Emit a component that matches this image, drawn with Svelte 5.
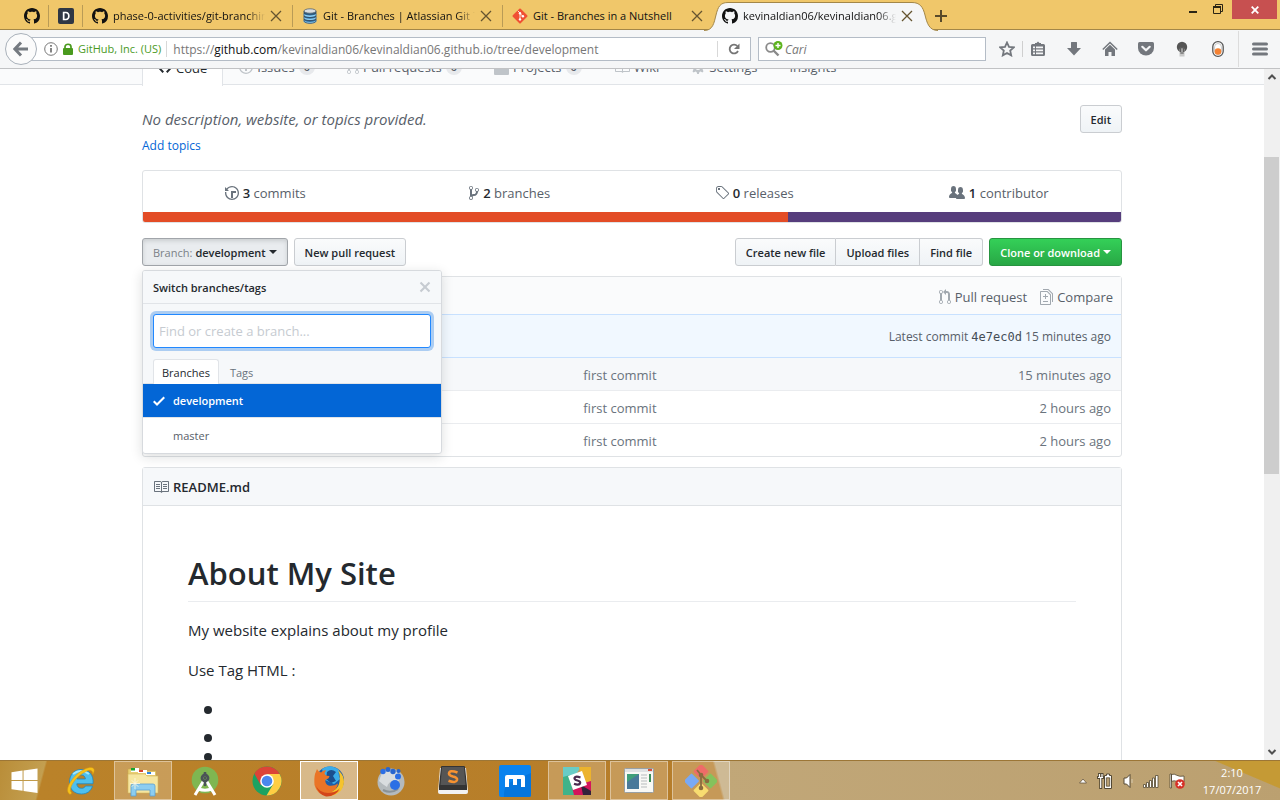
<script>
  const icons = {
    github: [16, 'M8 0C3.58 0 0 3.58 0 8c0 3.54 2.29 6.53 5.47 7.59.4.07.55-.17.55-.38 0-.19-.01-.82-.01-1.49-2.01.37-2.53-.49-2.69-.94-.09-.23-.48-.94-.82-1.13-.28-.15-.68-.52-.01-.53.63-.01 1.08.58 1.23.82.72 1.21 1.87.87 2.33.66.07-.52.28-.87.51-1.07-1.78-.2-3.64-.89-3.64-3.95 0-.87.31-1.59.82-2.15-.08-.2-.36-1.02.08-2.12 0 0 .67-.21 2.2.82.64-.18 1.32-.27 2-.27.68 0 1.36.09 2 .27 1.53-1.04 2.2-.82 2.2-.82.44 1.1.16 1.92.08 2.12.51.56.82 1.27.82 2.15 0 3.07-1.87 3.75-3.65 3.95.29.25.54.73.54 1.48 0 1.07-.01 1.93-.01 2.2 0 .21.15.46.55.38A8.013 8.013 0 0 0 16 8c0-4.42-3.58-8-8-8z'],
    history: [14, 'M8 13H6V6h5v2H8v5zM7 1C4.81 1 2.87 2.02 1.59 3.59L0 2v4h4L2.5 4.5C3.55 3.17 5.17 2.3 7 2.3c3.14 0 5.7 2.56 5.7 5.7s-2.56 5.7-5.7 5.7A5.71 5.71 0 0 1 1.3 8c0-.34.03-.67.09-1H.08C.03 7.33 0 7.66 0 8c0 3.86 3.14 7 7 7s7-3.14 7-7-3.14-7-7-7z'],
    branch: [10, 'M10 5c0-1.11-.89-2-2-2a1.993 1.993 0 0 0-1 3.72v.3c-.02.52-.23.98-.63 1.38-.4.4-.86.61-1.38.63-.83.02-1.48.16-2 .45V4.72a1.993 1.993 0 0 0-1-3.72C.88 1 0 1.89 0 3a2 2 0 0 0 1 1.72v6.56c-.59.35-1 .99-1 1.72 0 1.11.89 2 2 2 1.11 0 2-.89 2-2 0-.53-.2-1-.53-1.36.09-.06.48-.41.59-.47.25-.11.56-.17.94-.17 1.05-.05 1.95-.45 2.75-1.25S8.95 7.77 9 6.73h-.02C9.59 6.37 10 5.73 10 5zM2 1.8c.66 0 1.2.55 1.2 1.2 0 .65-.55 1.2-1.2 1.2C1.35 4.2.8 3.65.8 3c0-.65.55-1.2 1.2-1.2zm0 12.41c-.66 0-1.2-.55-1.2-1.2 0-.65.55-1.2 1.2-1.2.65 0 1.2.55 1.2 1.2 0 .65-.55 1.2-1.2 1.2zm6-8c-.66 0-1.2-.55-1.2-1.2 0-.65.55-1.2 1.2-1.2.65 0 1.2.55 1.2 1.2 0 .65-.55 1.2-1.2 1.2z'],
    tag: [14, 'M7.73 1.73C7.26 1.26 6.62 1 5.96 1H3.5C2.13 1 1 2.13 1 3.5v2.47c0 .66.27 1.3.73 1.77l6.06 6.06c.39.39 1.02.39 1.41 0l4.59-4.59a.996.996 0 0 0 0-1.41L7.73 1.73zM2.38 7.09c-.31-.3-.47-.7-.47-1.13V3.5c0-.88.72-1.59 1.59-1.59h2.47c.42 0 .83.16 1.13.47l6.14 6.13-4.73 4.73-6.13-6.15zM3.01 3h2v2H3V3h.01z'],
    people: [16, 'M16 12.999c0 .439-.45 1-1 1H7.995c-.539 0-.994-.447-.995-.999H1c-.54 0-1-.561-1-1 0-2.634 3-4 3-4s.229-.409 0-1c-.841-.621-1.058-.59-1-3 .058-2.419 1.367-3 2.5-3s2.442.58 2.5 3c.058 2.41-.159 2.379-1 3-.229.59 0 1 0 1s1.549.711 2.42 2.088C9.196 9.369 10 8.999 10 8.999s.229-.409 0-1c-.841-.62-1.058-.59-1-3 .058-2.419 1.367-3 2.5-3s2.437.581 2.495 3c.059 2.41-.158 2.38-1 3-.229.59 0 1 0 1s3.005 1.366 3.005 4'],
    pull: [12, 'M11 11.28V5c-.03-.78-.34-1.47-.94-2.06C9.46 2.35 8.78 2.03 8 2H7V0L4 3l3 3V4h1c.27.02.48.11.69.31.21.2.3.42.31.69v6.28A1.993 1.993 0 0 0 10 15a1.993 1.993 0 0 0 1-3.72zm-1 2.92c-.66 0-1.2-.55-1.2-1.2 0-.65.55-1.2 1.2-1.2.65 0 1.2.55 1.2 1.2 0 .65-.55 1.2-1.2 1.2zM4 3c0-1.11-.89-2-2-2a1.993 1.993 0 0 0-1 3.72v6.56A1.993 1.993 0 0 0 2 15a1.993 1.993 0 0 0 1-3.72V4.72c.59-.34 1-.98 1-1.72zm-.8 10c0 .66-.55 1.2-1.2 1.2-.65 0-1.2-.55-1.2-1.2 0-.65.55-1.2 1.2-1.2.65 0 1.2.55 1.2 1.2zM2 4.2C1.34 4.2.8 3.65.8 3c0-.65.55-1.2 1.2-1.2.65 0 1.2.55 1.2 1.2 0 .65-.55 1.2-1.2 1.2z'],
    diff: [13, 'M6 7h2v1H6v2H5V8H3V7h2V5h1v2zm-3 6h5v-1H3v1zM7.5 2L11 5.5V15c0 .55-.45 1-1 1H1c-.55 0-1-.45-1-1V3c0-.55.45-1 1-1h6.5zM10 6L7 3H1v12h9V6zM8.5 0H3v1h5l4 4v8h1V4.5L8.5 0z'],
    book: [16, 'M3 5h4v1H3V5zm0 3h4V7H3v1zm0 2h4V9H3v1zm11-5h-4v1h4V5zm0 2h-4v1h4V7zm0 2h-4v1h4V9zm2-6v9c0 .55-.45 1-1 1H9.5l-1 1-1-1H2c-.55 0-1-.45-1-1V3c0-.55.45-1 1-1h5.5l1 1 1-1H15c.55 0 1 .45 1 1zm-8 .5L7.5 3H2v9h6V3.5zm7-.5H9.5l-.5.5V12h6V3z'],
    check: [12, 'M12 5l-8 8-4-4 1.5-1.5L4 10l6.5-6.5L12 5z'],
    x: [12, 'M7.48 8l3.75 3.75-1.48 1.48L6 9.48l-3.75 3.75-1.48-1.48L4.52 8 .77 4.25l1.48-1.48L6 6.52l3.75-3.75 1.48 1.48L7.48 8z'],
    code: [14, 'M9.5 3L8 4.5 11.5 8 8 11.5 9.5 13 14 8 9.5 3zm-5 0L0 8l4.5 5L6 11.5 2.5 8 6 4.5 4.5 3z'],
    issue: [14, 'M7 2.3c3.14 0 5.7 2.56 5.7 5.7s-2.56 5.7-5.7 5.7A5.71 5.71 0 0 1 1.3 8c0-3.14 2.56-5.7 5.7-5.7zM7 1C3.14 1 0 4.14 0 8s3.14 7 7 7 7-3.14 7-7-3.14-7-7-7zm1 3H6v5h2V4zm0 6H6v2h2v-2z'],
    project: [15, 'M10 12h3V2h-3v10zm-4-2h3V2H6v8zm-4 4h3V2H2v12zm-1 1h13V1H1v14zM14 0H1a1 1 0 0 0-1 1v14a1 1 0 0 0 1 1h13a1 1 0 0 0 1-1V1a1 1 0 0 0-1-1z'],
    gear: [14, 'M14 8.77v-1.6l-1.94-.64-.45-1.09.88-1.84-1.13-1.13-1.81.91-1.09-.45-.69-1.92h-1.6l-.63 1.94-1.11.45-1.84-.88-1.13 1.13.91 1.81-.45 1.09L0 7.23v1.59l1.94.64.45 1.09-.88 1.84 1.13 1.13 1.81-.91 1.09.45.69 1.92h1.59l.63-1.94 1.11-.45 1.84.88 1.13-1.13-.92-1.81.47-1.09L14 8.75v.02zM7 11c-1.66 0-3-1.34-3-3s1.34-3 3-3 3 1.34 3 3-1.34 3-3 3z'],
  };

  const navTabs = [
    { icon: 'code', label: 'Code', active: true },
    { icon: 'issue', label: 'Issues', count: 0 },
    { icon: 'pull', label: 'Pull requests', count: 0 },
    { icon: 'project', label: 'Projects', count: 0 },
    { icon: 'book', label: 'Wiki' },
    { icon: 'gear', label: 'Settings' },
    { label: 'Insights', caret: true },
  ];
  const stats = [
    { icon: 'history', n: 3, label: 'commits' },
    { icon: 'branch', n: 2, label: 'branches' },
    { icon: 'tag', n: 0, label: 'releases' },
    { icon: 'people', n: 1, label: 'contributor' },
  ];
  const rows = [
    { message: 'first commit', age: '15 minutes ago' },
    { message: 'first commit', age: '2 hours ago' },
    { message: 'first commit', age: '2 hours ago' },
  ];
  const apps = [
    { id: 'ie' },
    { id: 'explorer', open: true },
    { id: 'android' },
    { id: 'chrome' },
    { id: 'firefox', open: true, active: true },
    { id: 'paw' },
    { id: 'sublime' },
    { id: 'maxthon' },
    { id: 'slack', open: true },
    { id: 'window', open: true },
    { id: 'git', open: true },
  ];
</script>

{#snippet icon(name)}
  <svg class="octicon" width={icons[name][0]} height="16" viewBox="0 0 {icons[name][0]} 16" aria-hidden="true"><path d={icons[name][1]} /></svg>
{/snippet}

{#snippet closeX()}
  <button class="tab-close" aria-label="Close tab"><svg width="12" height="12" viewBox="0 0 12 12"><path d="M1 1l10 10M11 1L1 11" stroke="#655430" stroke-width="1.3" fill="none" /></svg></button>
{/snippet}

<div class="screen">
  <header class="tabstrip">
    <div class="tab pinned">{@render icon('github')}</div>
    <div class="tab pinned">
      <svg width="16" height="16" viewBox="0 0 16 16"><rect width="16" height="16" rx="2" fill="#2f3744" /><path d="M4.8 3.8h3.1c2.4 0 3.8 1.6 3.8 4.2s-1.400 4.200-3.800 4.200H4.800zM6.500 5.300v5.400h1.300c1.400 0 2.200-1 2.200-2.700s-.8-2.700-2.200-2.700z" fill="#fff" fill-rule="evenodd" /></svg>
    </div>
    <div class="tab">{@render icon('github')}<span class="tab-title">phase-0-activities/git-branching</span>{@render closeX()}</div>
    <div class="tab">
      <svg width="16" height="16" viewBox="0 0 16 16"><path d="M2 3v10c0 3 12 3 12 0V3z" fill="#2e6f9f" /><path d="M2 6c0 3 12 3 12 0M2 9.300c0 3 12 3 12 0M2 12.500c0 3 12 3 12 0" stroke="#8ed0f5" stroke-width="1.600" fill="none" /><path d="M2 3v10c0 3 12 3 12 0V3M2 4.700c1 2 11 2 12 0M2 8c1 2 11 2 12 0M2 11c1 2 11 2 12 0" stroke="#34495e" stroke-width=".8" fill="none" /><ellipse cx="8" cy="3" rx="6" ry="2.200" fill="#d8dde0" stroke="#56636e" stroke-width=".8" /></svg>
      <span class="tab-title">Git - Branches | Atlassian Git Tutorial</span>{@render closeX()}
    </div>
    <div class="tab">
      <svg width="16" height="16" viewBox="0 0 16 16"><rect x="2.400" y="2.400" width="11.200" height="11.200" rx="1" transform="rotate(45 8 8)" fill="#f05033" /><path d="M5.800 2.800l2.200 2.200v6.500M8 5.500l2.800 2.800" stroke="#fde5dc" stroke-width="1" fill="none" /><circle cx="8" cy="5.200" r="1.200" fill="#fff" /><circle cx="8" cy="11.400" r="1.200" fill="#fff" /><circle cx="10.900" cy="8.200" r="1.200" fill="#fff" /></svg>
      <span class="tab-title whole">Git - Branches in a Nutshell</span>{@render closeX()}
    </div>
    <div class="tab current">
      <svg class="tab-shape" viewBox="0 0 234 30" preserveAspectRatio="none" aria-hidden="true"><path d="M0 30V29.500C9 29.500 10 22 12 14S16 1.500 24 1.500H208C216 1.500 219 6 221 14S225 29.500 234 29.500V30z" fill="#f5f6f7" /><path d="M0 29.500C9 29.500 10 22 12 14S16 1.500 24 1.500H208C216 1.500 219 6 221 14S225 29.500 234 29.500" fill="none" stroke="#a38748" /></svg>
      {@render icon('github')}<span class="tab-title">kevinaldian06/kevinaldian06.github.io</span>{@render closeX()}
    </div>
    <button class="new-tab" aria-label="New tab"><svg width="14" height="14" viewBox="0 0 14 14"><path d="M7 1v12M1 7h12" stroke="#594a2a" stroke-width="2" /></svg></button>
    <div class="window-buttons">
      <button aria-label="Minimize"><svg width="8" height="20" viewBox="0 0 8 20"><path d="M0 11h8v2H0z" fill="#2b2514" /></svg></button>
      <button aria-label="Restore"><svg width="10" height="20" viewBox="0 0 10 20"><path d="M2.500 6V4.500h7v7H8" fill="none" stroke="#2b2514" /><path d="M.5 6.500h7v7h-7z" fill="none" stroke="#2b2514" /><path d="M0 6h8v2H0z" fill="#2b2514" /></svg></button>
      <button class="close" aria-label="Close window"><svg width="8" height="8" viewBox="0 0 8 8"><path d="M.7.7l6.600 6.600M7.300.7L.7 7.300" stroke="#fff" stroke-width="1.800" /></svg></button>
    </div>
  </header>

  <div class="toolbar">
    <button class="back" aria-label="Back"><svg width="16" height="16" viewBox="0 0 16 16"><path d="M8 1.500L1.800 8 8 14.500M2.500 8H15" fill="none" stroke="#757a80" stroke-width="3" /></svg></button>
    <div class="urlbar">
      <svg width="14" height="14" viewBox="0 0 14 14"><circle cx="7" cy="7" r="6.300" fill="none" stroke="#777" /><path d="M6.200 6h1.600v4.500H6.200zM6.200 3h1.600v1.700H6.200z" fill="#666" /></svg>
      <svg width="10" height="12" viewBox="0 0 10 12"><path d="M2 6V3.800C2 .4 8 .4 8 3.800V6" fill="none" stroke="#4a9a1e" stroke-width="1.700" /><rect y="5" width="10" height="7" rx="1" fill="#4a9a1e" /></svg>
      <span class="identity">GitHub, Inc. (US)</span>
      <span class="url">https://<b>github.com</b>/kevinaldian06/kevinaldian06.github.io/tree/development</span>
      <button class="reload" aria-label="Reload"><svg width="12" height="12" viewBox="0 0 12 12"><path d="M9.300 3A4.400 4.400 0 1 0 10 8" fill="none" stroke="#757575" stroke-width="1.800" /><path d="M11.500.5V6H6z" fill="#757575" /></svg></button>
    </div>
    <div class="searchbar">
      <svg width="18" height="16" viewBox="0 0 18 16"><circle cx="5.500" cy="6.500" r="4.300" fill="none" stroke="#8a8a8a" stroke-width="1.800" /><path d="M8.500 9.500l5 5" stroke="#8a8a8a" stroke-width="2.400" /><circle cx="13" cy="4.500" r="4.500" fill="#5cb31d" /><path d="M13 2v5M10.500 4.500h5" stroke="#fff" stroke-width="1.400" /></svg>
      <input type="text" placeholder="Cari" aria-label="Cari" />
    </div>
    <div class="tools">
      <button aria-label="Bookmark"><svg width="16" height="16" viewBox="0 0 16 16"><path d="M8 1.500l2 4.400 4.800.5-3.600 3.200 1 4.800L8 12l-4.200 2.400 1-4.800L1.200 6.400 6 5.900z" fill="none" stroke="#73777d" stroke-width="1.800" /></svg></button>
      <button class="listed" aria-label="Bookmarks list"><svg width="16" height="16" viewBox="0 0 16 16"><path d="M5 3V2h1.500L8 .5 9.500 2H11v1h2.500q1.500 0 1.500 1.500v9q0 1.500-1.500 1.500h-11Q1 15 1 13.500v-9Q1 3 2.500 3z" fill="#73777d" /><path d="M3 5.500h2v1.800H3zM6 5.500h7v1.800H6zM3 8.500h2v1.800H3zM6 8.500h7v1.800H6zM3 11.500h2v1.800H3zM6 11.500h7v1.800H6z" fill="#f5f6f7" /></svg></button>
      <button aria-label="Downloads"><svg width="16" height="16" viewBox="0 0 16 16"><path d="M5 1.500Q5 1 5.500 1h5q.5 0 .5.500V7h4l-7 7.500L1 7h4z" fill="#73777d" /></svg></button>
      <button aria-label="Home"><svg width="16" height="16" viewBox="0 0 16 16"><path d="M.8 8.500L8 1.500l7.200 7" fill="none" stroke="#73777d" stroke-width="1.500" /><path d="M3 8.500L8 3.800l5 4.700V15H9.500v-4h-3v4H3z" fill="#73777d" /></svg></button>
      <button aria-label="Pocket"><svg width="16" height="16" viewBox="0 0 16 16"><path d="M1.500 1h13Q16 1 16 2.500V7a8 7.500 0 0 1-16 0V2.500Q0 1 1.500 1z" fill="#73777d" /><path d="M4.300 5.800L8 9.300l3.700-3.500" fill="none" stroke="#f5f6f7" stroke-width="2.200" stroke-linecap="round" stroke-linejoin="round" /></svg></button>
      <button aria-label="Lamp"><svg width="16" height="16" viewBox="0 0 16 16"><circle cx="8" cy="6" r="5.200" fill="#555" /><path d="M5.500 15.500V8q2.500-3.500 5 0v7.500z" fill="#c8c8c8" /><path d="M6.300 11V7.500q1.700-2 3.400 0V11" fill="none" stroke="#444" /><path d="M8 7v6M6 12h4" stroke="#777" /></svg></button>
      <button aria-label="Toggle"><svg width="16" height="16" viewBox="0 0 16 16"><rect x="2.800" y=".7" width="10.400" height="14.600" rx="5" fill="#fff" stroke="#555" stroke-width="1.300" /><rect x="4.600" y="2.500" width="6.800" height="11" rx="3.400" fill="none" stroke="#aaa" stroke-width=".6" /><circle cx="8" cy="10.500" r="3.300" fill="#f58233" /></svg></button>
    </div>
    <button class="menu" aria-label="Menu"><svg width="16" height="14" viewBox="0 0 16 14"><path d="M1.500 2h13M1.500 7h13M1.500 12h13" stroke="#73777d" stroke-width="3" stroke-linecap="round" /></svg></button>
  </div>

  <div class="viewport">
    <div class="page">
      <nav class="reponav">
        <div class="container navrow">
          {#each navTabs as t}
            <a href="#top" class="navtab" class:selected={t.active}>
              {#if t.icon}{@render icon(t.icon)}{/if}<span>{t.label}</span>
              {#if t.count !== undefined}<span class="counter">{t.count}</span>{/if}
              {#if t.caret}<i class="caret"></i>{/if}
            </a>
          {/each}
        </div>
      </nav>

      <main class="container">
        <div class="about">
          <div>
            <p class="desc">No description, website, or topics provided.</p>
            <a href="#top" class="topics">Add topics</a>
          </div>
          <button class="btn">Edit</button>
        </div>

        <div class="summary">
          <ul>
            {#each stats as s}
              <li>{@render icon(s.icon)}<span><b>{s.n}</b> {s.label}</span></li>
            {/each}
          </ul>
          <div class="langs"><span class="html"></span><span class="css"></span></div>
        </div>

        <div class="filenav">
          <div class="branch-select">
            <button class="btn pressed"><span class="muted">Branch:</span> <span>development</span> <i class="caret"></i></button>
            <div class="popup">
              <div class="popup-head"><span>Switch branches/tags</span><button aria-label="Close">{@render icon('x')}</button></div>
              <div class="popup-filter">
                <input type="text" placeholder="Find or create a branch..." aria-label="Find or create a branch" />
                <div class="popup-tabs"><button class="on">Branches</button><button>Tags</button></div>
              </div>
              <a href="#top" class="item chosen">{@render icon('check')}<span>development</span></a>
              <a href="#top" class="item"><span>master</span></a>
            </div>
          </div>
          <button class="btn">New pull request</button>
          <div class="group">
            <button class="btn">Create new file</button><button class="btn">Upload files</button><button class="btn">Find file</button>
          </div>
          <button class="btn primary">Clone or download <i class="caret"></i></button>
        </div>

        <section class="files">
          <div class="compare">
            <a href="#top">{@render icon('pull')}Pull request</a>
            <a href="#top">{@render icon('diff')}Compare</a>
          </div>
          <div class="latest"><span>Latest commit <code>4e7ec0d</code> 15 minutes ago</span></div>
          <table>
            <tbody>
              {#each rows as r}
                <tr><td class="name"></td><td class="message">{r.message}</td><td class="age">{r.age}</td></tr>
              {/each}
            </tbody>
          </table>
        </section>

        <section class="readme">
          <h3>{@render icon('book')}<span>README.md</span></h3>
          <article>
            <h1>About My Site</h1>
            <p>My website explains about my profile</p>
            <p>Use Tag HTML :</p>
            <ul><li></li><li></li><li></li></ul>
          </article>
        </section>
      </main>
    </div>
    <div class="scrollbar" aria-hidden="true">
      <svg width="16" height="16" viewBox="0 0 16 16"><path d="M4.500 10L8 6.500l3.500 3.500" fill="none" stroke="#505050" stroke-width="2" /></svg>
      <div class="track"><div class="thumb"></div></div>
      <svg width="16" height="16" viewBox="0 0 16 16"><path d="M4.500 6L8 9.500 11.500 6" fill="none" stroke="#505050" stroke-width="2" /></svg>
    </div>
  </div>

  <footer class="taskbar">
    <button class="start" aria-label="Start"><svg width="27" height="26" viewBox="0 0 28 26"><path d="M.5 4L12 2.200V12H.5zM13 2L27.500 0v12H13zM.5 13H12v10L.5 21.500zM13 13h14.500v12.500L13 23.300z" fill="#fff" /></svg></button>
    {#each apps as app}
      <button class="app" class:open={app.open} class:active={app.active} aria-label={app.id}>
        <svg width="32" height="32" viewBox="0 0 32 32">
          {#if app.id === 'ie'}
            <path d="M16 4.500C9 4.500 4.500 10 4.500 17S9 29 16.500 29c5.500 0 9.500-3 11-8h-7c-.8 1.500-2 2.300-4 2.300-3 0-4.500-1.800-4.700-4.500H28C29 10 24 4.500 16 4.500zM11.800 14c.4-2.500 2-4 4.400-4s4 1.500 4.200 4z" fill="#4fc0ee" stroke="#1c86c4" stroke-width=".8" />
            <path d="M8 9q8-6 16 0" stroke="#a4e8fb" stroke-width="2" fill="none" />
            <path d="M5 29.500C-2 26 7 10 20 4c5-2.300 9-2 9.200 1 .1 1.500-.5 3-1.500 4.500C28 5 25 4 20 7 10 12 2 25 7 28z" fill="#f7c21a" stroke="#d9960b" stroke-width=".5" />
          {:else if app.id === 'explorer'}
            <path d="M1 4h9l2 2h17v20H1z" fill="#e9cf74" stroke="#c9a748" stroke-width=".6" /><path d="M4 3h8v4H4z" fill="#fff" /><path d="M4 3h4v2.500H4z" fill="#18a52c" /><path d="M11 5h9v3h-9z" fill="#fff" /><path d="M12 5h4v2h-4z" fill="#d8472f" /><path d="M19 7h9v3h-9z" fill="#fff" /><path d="M20 7h4v2h-4z" fill="#2b84dc" />
            <path d="M1 9h17l2 2h11v17H1z" fill="#f6e6a0" stroke="#d5b65c" stroke-width=".6" /><path d="M4 31V21q0-2 2-2h20q2 0 2 2v10h-5v-6H9v6z" fill="#8ccdf0" stroke="#5b9fd0" stroke-width=".8" /><path d="M8 13v11M3 18.500h10M4.800 15.300l6.400 6.400M11.200 15.300l-6.400 6.400" stroke="#fffbe4" stroke-width=".8" />
          {:else if app.id === 'android'}
            <circle cx="16" cy="15" r="13.300" fill="#7fb651" /><path d="M14.500 16L6 30M17.500 16L26 30M9.500 24q6.500 2.500 13 0" fill="none" stroke="#fff" stroke-width="3" /><circle cx="16" cy="13" r="3" fill="#84b55b" stroke="#4b5357" stroke-width="2.800" /><path d="M16 7v3M16 17v4" stroke="#4b5357" stroke-width="2.500" /><circle cx="16" cy="13" r="1.200" fill="#4b5357" />
          {:else if app.id === 'chrome'}
            <circle cx="16" cy="16" r="14.500" fill="#1da261" /><path d="M3.400 8.800L9.700 20 16 9h12.600A14.500 14.500 0 0 0 3.400 8.800z" fill="#dc4437" /><path d="M16 9h12.600A14.500 14.500 0 0 1 15.500 30.500L22.300 19z" fill="#ffce43" /><circle cx="16" cy="16" r="6.800" fill="#fff" /><circle cx="16" cy="16" r="5.300" fill="#4a87ee" />
          {:else if app.id === 'firefox'}
            <circle cx="17" cy="15.500" r="14" fill="#1d5ea8" /><path d="M9 4q8-6 17 1-1 5 1 9l-6 5-9-4z" fill="#3bacea" /><path d="M14 7q4-4 9 0l-3 4 3 5-5 2-5-4z" fill="#1b4f8f" />
            <path d="M25 5q6 5 6 12-1 12-14 14-6 0-9-3 15 0 18-9 2-7-1-14z" fill="#f6c32d" /><path d="M2 9l2-5q1 3 4 3.500 3-3 5-2-2 2-1 4 1 1.500 4.500 1.500-.5 3-4 3.500-1 4 3 6 5 1 9.500-2-1 6-6 8 4 1 8-2-5 7-13 6Q4 30 1.500 20 1 13 2 9z" fill="#ea7426" /><path d="M3 21q4 7 12 7 8 0 12-5-5 9-14 8.500Q6 30 3 21z" fill="#d3461a" />
          {:else if app.id === 'paw'}
            <circle cx="16" cy="17" r="13.500" fill="#b4babd" /><path d="M7 8q8-6 15-1 4 5 1 10-9-3-11 5-5-3-8-6z" fill="#d9dddf" /><path d="M8 25q8 4 15-1" stroke="#8b9295" fill="none" stroke-width="2" /><circle cx="20" cy="20" r="5" fill="#2c6fe5" /><circle cx="23" cy="11.500" r="3" fill="#2c6fe5" /><circle cx="18" cy="6.500" r="2.700" fill="#2866cf" /><circle cx="23.500" cy="6" r="2" fill="#2866cf" /><circle cx="13" cy="4.500" r="2.500" fill="#2866cf" /><circle cx="8" cy="6.500" r="2.700" fill="#2c6fe5" />
          {:else if app.id === 'sublime'}
            <path d="M3 3h26l2 24q0 2-2 2H3q-2 0-2-2z" fill="#f2f2f2" /><path d="M4 2q0-1 1-1h22q1 0 1 1l2 19v4H2v-4z" fill="#343434" /><path d="M5 2h22l1.500 18h-25z" fill="#555" /><path d="M20.500 7.500q-8-3-8.500 1 0 2 4 3 4.500 1 4 3.500-1 3.500-8.500.7" fill="none" stroke="#f69231" stroke-width="2.600" />
          {:else if app.id === 'maxthon'}
            <rect width="32" height="32" rx="2" fill="#0a83ee" /><path d="M5 32Q4 20 14 16L32 8v22q0 2-2 2z" fill="#0576dd" /><path d="M6 22V12q0-2 2-2h16q2 0 2 2v10h-4v-8h-4v6h-4v-6h-4v8z" fill="#fff" />
          {:else if app.id === 'slack'}
            <path d="M2 2h18L9 18 2 20z" fill="#68ccc6" /><path d="M18 2h12v14L22 18z" fill="#ecb32d" /><path d="M2 12l7-2 7 20H2z" fill="#40b389" /><path d="M11 22l19-6v14H13z" fill="#d4145b" /><path d="M20 20l10 6v4h-8z" fill="#32213b" /><path d="M7 11l14-5 5 14-14 5z" fill="#fff" /><path d="M19.500 12.500q-5-2-6 .5-.3 1.800 3 2.500 3.500 1 2.500 3-1.500 2-6 .3" fill="none" stroke="#4a2b4e" stroke-width="2.200" />
          {:else if app.id === 'window'}
            <rect x="1.500" y="3.500" width="29" height="24" rx="1" fill="#f8f8f5" stroke="#98a0a5" /><path d="M2 4h28v3H2z" fill="#dfe2e4" /><path d="M25 4h4v2h-4z" fill="#d35141" /><path d="M4 9h12v15H4z" fill="#3f9f7a" /><path d="M4 17L16 9v15H4z" fill="#49799a" /><path d="M18 10h6M18 13h6M18 16h6M18 19h6M18 22h6" stroke="#b7bbbd" /><path d="M26 9h2v8h-2z" fill="#3b8f5a" />
          {:else if app.id === 'git'}
            <rect x="10.500" y="1" width="11" height="11" rx="1" transform="rotate(45 16 6.500)" fill="#ee6c68" /><rect x="1" y="10.500" width="11" height="11" rx="1" transform="rotate(45 6.500 16)" fill="#79a9f4" /><rect x="20" y="10.500" width="11" height="11" rx="1" transform="rotate(45 25.500 16)" fill="#85c25c" /><rect x="10.500" y="20" width="11" height="11" rx="1" transform="rotate(45 16 25.500)" fill="#f8dc70" /><path d="M12 5l4 5v13M16 10l6 6" stroke="#8a6c3f" stroke-width="1.800" fill="none" /><circle cx="16" cy="10" r="2.300" fill="#8a6c3f" /><circle cx="22" cy="16" r="2.300" fill="#8a6c3f" /><circle cx="16" cy="23" r="2.300" fill="#8a6c3f" />
          {/if}
        </svg>
      </button>
    {/each}
    <div class="tray">
      <svg width="8" height="6" viewBox="0 0 8 6"><path d="M4 1L7.500 5H.5z" fill="#fff" stroke="#655640" stroke-width=".8" /></svg>
      <svg width="16" height="16" viewBox="0 0 16 16"><path d="M2.500 5V0M5 5V0M0 4.500h7M3.700 4v12" stroke="#544934" stroke-width="3" fill="none" /><path d="M2.500 5V1M5 5V1M1 4.500h5M3.700 5v10" stroke="#fff" stroke-width="1.200" fill="none" /><path d="M7.500 2.500h2V1h3v1.500h2v13h-7z" fill="#fff" stroke="#544934" /><path d="M9.300 4.800h3.400v8.400H9.300z" fill="#b99f73" stroke="#544934" stroke-width=".8" /></svg>
      <svg width="10" height="16" viewBox="0 0 10 16"><path d="M1 5h2.500L7 1.500v13L3.500 11H1z" fill="#fff" stroke="#544934" /><path d="M9 6v4" stroke="#d8cbb0" /></svg>
      <svg width="16" height="14" viewBox="0 0 16 14"><path d="M.5 10.500h2v3h-2zM3.500 8.500h2v5h-2zM6.500 6.500h2v7h-2zM9.500 4h2v9.500h-2zM12.500 1.500h2.500v12h-2.500z" fill="#fff" stroke="#544934" stroke-width=".8" /></svg>
      <svg width="16" height="16" viewBox="0 0 16 16"><path d="M1 1h1.500v14H1zM2.500 1.500q3-1 5 .7 3 1.800 7.500.8V9q-4 1-7.500-.7-2-1-5 0z" fill="#fff" stroke="#544934" stroke-width=".8" /><circle cx="11" cy="11" r="4.800" fill="#d63027" /><path d="M9 9l4 4M13 9l-4 4" stroke="#fff" stroke-width="1.600" /></svg>
      <div class="clock"><span>2:10</span><span>17/07/2017</span></div>
    </div>
  </footer>
</div>

<style>
  :global(body) { margin: 0; background: #fff; }
  * { box-sizing: border-box; }
  button { font: inherit; color: inherit; border: 0; background: none; padding: 0; display: flex; align-items: center; justify-content: center; }
  input { font: inherit; }
  ul, p, h1, h3 { margin: 0; padding: 0; }
  svg { flex: none; display: block; }
  a { color: inherit; text-decoration: none; }
  .octicon { fill: currentColor; }
  .screen { display: flex; flex-direction: column; height: 100vh; overflow: hidden; font-family: "Open Sans", "Noto Sans", sans-serif; color: #24292e; font-size: 13px; }

  .tabstrip { display: flex; align-items: center; flex: none; height: 30px; padding-left: 15px; background: #f0c76a; border-bottom: 1px solid #a38748; font-size: 11px; color: #111; }
  .tab { position: relative; display: flex; align-items: center; gap: 5px; width: 210px; height: 22px; padding: 0 10px 0 9px; margin-top: 2px; border-right: 1px solid #b99b56; }
  .tab.pinned { width: 34px; padding: 0 8px 0 9px; }
  .tab-title { position: relative; flex: 1; min-width: 0; overflow: hidden; white-space: nowrap; mask-image: linear-gradient(to right, #000 88%, transparent); }
  .tab-title.whole { mask-image: none; }
  .tab-close { width: 12px; height: 12px; }
  .tab.current { border: 0; }
  .tab.current > :global(*) { z-index: 1; position: relative; }
  .tab.current > .tab-shape { position: absolute; left: -9px; top: -4px; width: 234px; height: 30px; z-index: 0; }
  .tab:has(+ .current) { border: 0; }
  .new-tab { margin-left: 11px; margin-top: 2px; }
  .window-buttons { display: flex; align-self: flex-start; align-items: flex-start; gap: 16px; margin-left: auto; padding-right: 3px; }
  .window-buttons .close { width: 45px; height: 19px; background: #c75050; margin-left: -7px; }

  .toolbar { display: flex; align-items: center; flex: none; height: 39px; padding: 0 5px; background: #f5f6f7; border-bottom: 1px solid #c1c2c4; font-size: 12px; }
  .back { width: 32px; height: 32px; border: 1px solid #a9b1ba; border-radius: 50%; background: #fbfbfb; z-index: 1; flex: none; }
  .urlbar { display: flex; align-items: center; flex: 1; min-width: 0; height: 24px; margin-left: -7px; padding-left: 13px; gap: 5px; background: #fff; border: 1px solid #b4bcc6; }
  .identity { color: #4a9a1e; padding-right: 5px; border-right: 1px solid #d8d8d8; font-size: 11px; line-height: 16px; white-space: nowrap; }
  .url { flex: 1; min-width: 0; overflow: hidden; white-space: nowrap; color: #777; padding-left: 1px; }
  .url b { color: #111; font-weight: 400; }
  .reload { width: 33px; height: 16px; border-left: 1px solid #d8d8d8; }
  .searchbar { display: flex; align-items: center; width: 228px; height: 24px; margin-left: 7px; padding-left: 6px; background: #fff; border: 1px solid #b4bcc6; }
  .searchbar input { flex: 1; min-width: 0; border: 0; padding: 0 2px; background: none; outline: 0; }
  .searchbar input::placeholder { color: #777; font-style: italic; opacity: 1; }
  .tools { display: flex; gap: 20px; padding: 0 12px 0 13px; }
  .tools .listed { border-left: 1px solid #cfcfcf; padding-left: 7px; margin-left: -13px; }
  .menu { width: 37px; height: 36px; padding-left: 6px; border-left: 1px solid #dcdcdc; }

  .viewport { display: flex; flex: 1; min-height: 0; }
  .page { flex: 1; min-width: 0; overflow: hidden; background: #fff; }
  .container { max-width: 980px; margin: 0 auto; }
  .scrollbar { display: flex; flex-direction: column; width: 16px; background: #f0f0f0; }
  .track { flex: 1; padding: 72px 1px 0 0; }
  .thumb { height: 54%; background: #cdcdcd; }

  .reponav { margin-top: -21px; background: #fafbfc; border-bottom: 1px solid #e1e4e8; }
  .navrow { display: flex; height: 37px; margin-bottom: -1px; }
  .navtab { display: flex; align-items: center; gap: 4px; height: 38px; padding: 0 15px; color: #586069; border: 1px solid transparent; }
  .navtab > :global(.octicon) { color: #bfc4c9; }
  .navtab.selected { background: #fff; border-color: #e1e4e8; border-bottom: 0; color: #24292e; }
  .navtab.selected > :global(.octicon) { color: #24292e; }
  .counter { padding: 0 5px; font-size: 11px; font-weight: 600; line-height: 16px; background: #e7e9ec; border-radius: 10px; }
  .caret { display: inline-block; border: 4px solid transparent; border-top-color: currentColor; border-bottom: 0; vertical-align: middle; }

  .about { display: flex; justify-content: space-between; align-items: flex-start; margin-top: 20px; height: 65px; }
  .desc { font-size: 15px; line-height: 28px; font-style: italic; color: #586069; }
  .topics { display: block; font-size: 12px; line-height: 26px; color: #0366d6; }
  .btn { height: 28px; padding: 0 10px; gap: 3px; font-size: 11px; font-weight: 600; color: #24292e; white-space: nowrap; border: 1px solid #cacdd1; border-radius: 3px; background: linear-gradient(#fafbfc, #eff3f6); }
  .btn.pressed { background: #e9ecef; border-color: #a1a5aa; box-shadow: inset 0 2px 4px rgba(27, 31, 35, .15); }
  .muted { color: #7b8188; font-weight: 400; }
  .btn.primary { color: #fff; border-color: #279440; background: linear-gradient(#34d058, #28a745); }

  .summary { border: 1px solid #dfe2e5; border-radius: 3px; overflow: hidden; }
  .summary ul { display: grid; grid-template-columns: repeat(4, 1fr); list-style: none; height: 41px; padding-top: 2px; }
  .summary li { display: flex; align-items: center; justify-content: center; gap: 4px; color: #586069; }
  .summary li > :global(.octicon) { color: #6a737d; }
  .summary b { font-weight: 600; color: #24292e; }
  .langs { display: flex; height: 10px; }
  .langs .html { width: 66%; background: #e34c26; }
  .langs .css { flex: 1; background: #563d7c; }

  .filenav { display: flex; gap: 6px; margin: 15px 0 10px; }
  .branch-select { position: relative; }
  .group { display: flex; margin-left: auto; }
  .group .btn { border-radius: 0; }
  .group .btn + .btn { border-left: 0; }
  .group .btn:first-child { border-radius: 3px 0 0 3px; }
  .group .btn:last-child { border-radius: 0 3px 3px 0; }

  .popup { position: absolute; z-index: 5; left: 0; top: 32px; width: 300px; background: #fff; border: 1px solid #d7dade; border-radius: 3px; box-shadow: 0 3px 12px rgba(27, 31, 35, .15); font-size: 11px; overflow: hidden; }
  .popup-head { display: flex; justify-content: space-between; align-items: center; height: 33px; padding: 0 10px; font-weight: 600; background: #f6f8fa; border-bottom: 1px solid #e1e4e8; }
  .popup-head button { color: #c6cbd1; }
  .popup-filter { padding: 10px 10px 0; background: #f6f8fa; border-bottom: 1px solid #e1e4e8; }
  .popup-filter input { display: block; width: 100%; height: 34px; padding: 0 5px; font-size: 13px; border: 1px solid #2188ff; border-radius: 3px; outline: 0; box-shadow: 0 0 0 3px #accdf2; background: #fff; }
  .popup-filter input::placeholder { color: #c6cbd1; opacity: 1; }
  .popup-tabs { display: flex; gap: 2px; margin: 11px 0 -1px; height: 25px; }
  .popup-tabs button { padding: 0 8px; color: #6a737d; border: 1px solid transparent; border-bottom: 0; }
  .popup-tabs .on { color: #24292e; background: #fff; border-color: #e1e4e8; border-radius: 3px 3px 0 0; }
  .item { display: flex; align-items: center; gap: 8px; height: 35px; padding-left: 30px; color: #586069; }
  .item.chosen { height: 34px; padding-left: 10px; color: #fff; font-weight: 600; background: #0366d6; border-bottom: 1px solid #e1e4e8; }

  .files { border: 1px solid #dfe2e5; border-radius: 3px; color: #6a737d; }
  .compare { display: flex; justify-content: flex-end; gap: 13px; height: 37px; padding: 3px 8px 0; background: #fafbfc; color: #586069; }
  .compare a { display: flex; align-items: center; gap: 4px; }
  .compare a > :global(.octicon) { color: #a1a8af; }
  .latest { display: flex; align-items: center; justify-content: flex-end; height: 44px; padding: 0 10px; font-size: 12px; color: #586069; background: #f1f8ff; border: solid #c8e1ff; border-width: 1px 0; }
  .latest code { font-family: "DejaVu Sans Mono", monospace; font-size: 12px; color: #444d56; }
  table { width: 100%; border-collapse: collapse; table-layout: fixed; }
  tr { height: 33px; }
  tr + tr { border-top: 1px solid #eaecef; }
  tr:first-child { height: 32px; background: #f6f8fa; }
  td { padding: 2px 10px 0; }
  .name { width: 44%; }
  .age { text-align: right; }

  .readme { margin-top: 10px; border: 1px solid #dfe2e5; border-radius: 3px; }
  .readme h3 { display: flex; align-items: center; gap: 4px; height: 38px; padding: 0 10px; font-size: 13px; font-weight: 600; background: #f6f8fa; border-bottom: 1px solid #dfe2e5; }
  .readme h3 > :global(.octicon) { color: #6a737d; }
  article { padding: 46px 45px; font-size: 15px; line-height: 24px; }
  h1 { font-size: 31px; line-height: 42px; font-weight: 600; padding-bottom: 7px; margin-bottom: 16px; border-bottom: 1px solid #eaecef; }
  article p { margin-bottom: 16px; }
  article ul { padding-left: 16px; list-style: none; }
  article li { display: flex; align-items: center; height: 24px; }
  article li::before { content: ""; width: 8px; height: 8px; border-radius: 50%; background: #24292e; }
  article li + li { margin-top: 4px; }
  article li:last-child { margin-top: -5px; }

  .taskbar { display: flex; align-items: center; gap: 4px; flex: none; height: 40px; border-top: 1px solid #9c7636; background: linear-gradient(to top right, transparent 50%, #c59a35 52%) right top / 66px 28px no-repeat, linear-gradient(105deg, #b98d38 0, #c39f50 44px, #ba8229 46px, #b67d2a 54%, transparent 54%), linear-gradient(75deg, #b67d2a 56%, #c1a778 56.200%, #bba070 100%); }
  .start { width: 48px; height: 38px; }
  .app { width: 58px; height: 39px; border: 1px solid transparent; }
  .app.open { background: rgba(255, 255, 255, .22); border-color: rgba(255, 255, 255, .4); }
  .app.active { background: rgba(255, 255, 255, .45); border-color: #fff; }
  .tray { display: flex; align-items: center; gap: 10px; margin-left: auto; padding-right: 17px; }
  .clock { display: flex; flex-direction: column; align-items: center; width: 62px; margin-left: 6px; color: #fff; font-size: 11px; line-height: 17px; }
</style>
